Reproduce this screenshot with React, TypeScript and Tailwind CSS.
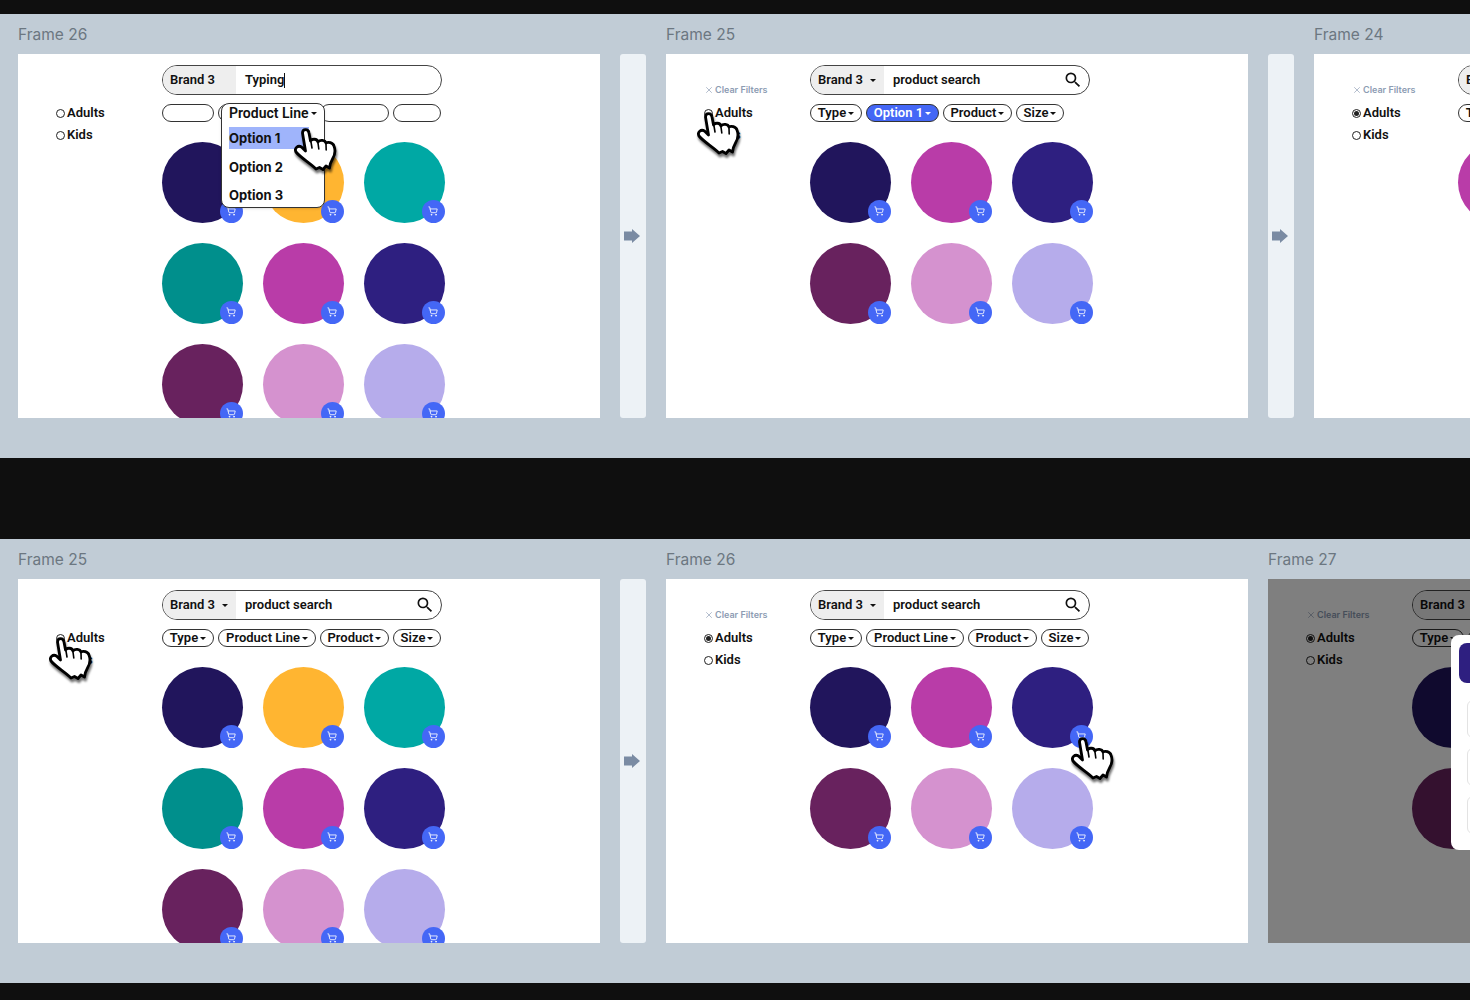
import { ShoppingCart, X } from 'lucide-react'
import { MdSearch } from 'react-icons/md'

type Props = {
  brandCaret?: boolean
  query: string
  typing?: boolean
  clear?: boolean
  selected?: boolean
  option?: boolean
  blank?: boolean
  colors: string[]
  hand?: string
  dim?: boolean
  dropdown?: boolean
}

const all = ['bg-[#21155c]', 'bg-[#ffb531]', 'bg-[#00a8a4]', 'bg-[#008f8c]', 'bg-[#b93ca8]', 'bg-[#2e1f80]', 'bg-[#68225e]', 'bg-[#d592cf]', 'bg-[#b6aceb]']
const filtered = ['bg-[#21155c]', 'bg-[#b93ca8]', 'bg-[#2e1f80]', 'bg-[#68225e]', 'bg-[#d592cf]', 'bg-[#b6aceb]']

function Caret({ className = 'ml-[2px] border-t-[#111]' }: { className?: string }) {
  return <span className={`h-0 w-0 border-x-[3px] border-t-[3px] border-x-transparent ${className}`} />
}

function Hand({ className }: { className: string }) {
  return (
    <svg viewBox="0 0 43 50" className={`absolute z-20 h-[50px] w-[43px] drop-shadow-[1px_3px_1px_rgba(0,0,0,0.55)] ${className}`}>
      <path
        d="M8.5 9C8.5 4.5 14.5 4.5 15 9L16.5 17C18 14.5 23 14.5 24 18C26 15.5 31 16 32 19C34 17.5 39 18.5 40 22C41.5 26 41 31 38.5 35C37 37.5 36 40 35.5 44L32 42L29 45.5L25.5 43.5L22 45C16 39 7 34 2 28C0 24 4 21 7.5 23L11.5 27Z"
        fill="#fff"
        stroke="#000"
        strokeWidth="2.8"
        strokeLinejoin="round"
      />
      <path d="M17 18L18 24M24 19L24.8 25M32 20L32.2 26" stroke="#000" strokeWidth="1.6" fill="none" strokeLinecap="round" />
    </svg>
  )
}

function Radio({ label, on }: { label: string; on?: boolean }) {
  return (
    <div className="flex h-[18px] items-center gap-[2px] font-['Roboto',sans-serif] text-[13px] font-semibold text-[#111]">
      <span className="flex h-[9px] w-[9px] items-center justify-center rounded-full border border-[#222]">
        {on && <span className="h-[5px] w-[5px] rounded-full bg-[#222]" />}
      </span>
      {label}
    </div>
  )
}

function Pill({ label, width, active, blank }: { label: string; width: string; active?: boolean; blank?: boolean }) {
  return (
    <div
      className={`flex h-[18px] items-center justify-center rounded-full border border-[#333] font-['Roboto',sans-serif] text-[13px] font-semibold ${width} ${
        active ? 'bg-[#4467f6] text-white' : 'bg-white text-[#111]'
      }`}
    >
      {!blank && label}
      {!blank && <Caret className={active ? 'ml-[2px] border-t-white' : 'ml-[2px] border-t-[#111]'} />}
    </div>
  )
}

function Product({ color }: { color: string }) {
  return (
    <div className={`relative h-[81px] w-[81px] rounded-full ${color}`}>
      <div className="absolute bottom-0 right-0 flex h-[23px] w-[23px] items-center justify-center rounded-full bg-[#4467f6] pb-px pr-px">
        <ShoppingCart size={10} strokeWidth={2} className="text-white" />
      </div>
    </div>
  )
}

function Dropdown() {
  return (
    <div className="absolute left-[203px] top-[49px] z-10 h-[105px] w-[104px] rounded-lg border border-[#333] bg-white px-[7px] font-['Inter',sans-serif] text-[13px] font-bold text-[#111] shadow-sm">
      <div className="flex h-[18px] items-center font-['Roboto',sans-serif] text-[14px] font-semibold">
        Product Line
        <Caret />
      </div>
      <div className="mt-[5px] flex h-[22px] w-[80px] items-center bg-[#9fb4fb] pt-px">Option 1</div>
      <div className="mt-[7px] flex h-[22px] items-center pt-px">Option 2</div>
      <div className="mt-[7px] flex h-[22px] items-center">Option 3</div>
    </div>
  )
}

function Modal() {
  return (
    <div className="absolute left-[183px] top-[56px] z-10 h-[215px] w-[300px] rounded-lg bg-white p-2">
      <div className="h-10 rounded-lg bg-[#2e1f80]" />
      <div className="ml-2 mt-[17px] flex flex-col gap-[10px]">
        <div className="h-[38px] rounded-md border border-[#e3e3e3]" />
        <div className="h-[38px] rounded-md border border-[#e3e3e3]" />
        <div className="h-[38px] rounded-md border border-[#e3e3e3]" />
      </div>
    </div>
  )
}

function Frame({ brandCaret = true, query, typing, clear = true, selected, option, blank, colors, hand, dim, dropdown }: Props) {
  return (
    <div className="relative flex h-[364px] w-[582px] shrink-0 overflow-hidden bg-white">
      <div className="w-[144px] shrink-0 pl-[38px] pt-[30px]">
        <div className="mb-2 flex h-3 items-center gap-px font-['Inter',sans-serif] text-[9px] font-semibold text-[#8d9cb3]">
          {clear && <X size={10} strokeWidth={1.6} />}
          {clear && 'Clear Filters'}
        </div>
        <div className="flex flex-col gap-[4px]">
          <Radio label="Adults" on={selected} />
          <Radio label="Kids" />
        </div>
      </div>
      <div className="w-[280px] shrink-0 pt-[11px]">
        <div className="flex h-[30px] items-center overflow-hidden rounded-full border border-[#444] font-['Roboto',sans-serif] text-[13px] font-semibold text-[#111]">
          <div className="flex h-full w-[73px] shrink-0 items-center bg-[#eeeeee] pl-[7px]">
            Brand 3
            {brandCaret && <Caret className="ml-[7px] border-t-[#111]" />}
          </div>
          <div className="flex flex-1 items-center pl-[9px] pr-[6px]">
            <span>{query}</span>
            {typing && <span className="h-[15px] w-px bg-[#111]" />}
            {!typing && <MdSearch size={20} className="ml-auto text-[#111]" />}
          </div>
        </div>
        <div className="mt-[9px] flex gap-1">
          <Pill label="Type" width="w-[52px]" blank={blank} />
          {option ? (
            <Pill label="Option 1" width="w-[73px]" active />
          ) : (
            <Pill label="Product Line" width="w-[98px]" blank={blank} />
          )}
          <Pill label="Product" width="w-[69px]" blank={blank} />
          <Pill label="Size" width="w-[48px]" blank={blank} />
        </div>
        <div className="mt-5 grid w-[283px] grid-cols-3 gap-5">
          {colors.map((c) => (
            <Product key={c} color={c} />
          ))}
        </div>
      </div>
      {dropdown && <Dropdown />}
      {hand && <Hand className={hand} />}
      {dim && <div className="absolute inset-0 bg-black/50" />}
      {dim && <Modal />}
    </div>
  )
}

function Label({ text, width }: { text: string; width: string }) {
  return (
    <div className={`flex h-10 shrink-0 items-center pt-px font-['Inter',sans-serif] text-[15.5px] text-[#6c7781] ${width}`}>{text}</div>
  )
}

function Connector() {
  return (
    <div className="flex h-[364px] w-[26px] shrink-0 items-center justify-center rounded-[3px] bg-[#edf2f6]">
      <svg viewBox="0 0 16 14" className="h-[14px] w-4 -translate-x-px text-[#7a8ba3]">
        <path d="M0 2.5H8V0L16 7L8 14V11.5H0Z" fill="currentColor" />
      </svg>
    </div>
  )
}

export default function App() {
  return (
    <div className="h-[1000px] w-[1470px] overflow-hidden bg-[#0f0f0f] pt-[14px]">
      <section className="h-[444px] overflow-hidden bg-[#c1ccd6] pl-[18px]">
        <div className="flex">
          <Label text="Frame 26" width="w-[648px]" />
          <Label text="Frame 25" width="w-[648px]" />
          <Label text="Frame 24" width="w-[300px]" />
        </div>
        <div className="flex gap-5">
          <Frame brandCaret={false} query="Typing" typing clear={false} blank colors={all} dropdown hand="left-[276px] top-[70px]" />
          <Connector />
          <Frame query="product search" option colors={filtered} hand="left-[31px] top-[54px]" />
          <Connector />
          <Frame query="product search" selected colors={filtered.slice(1, 4)} />
        </div>
      </section>
      <section className="mt-[81px] h-[444px] overflow-hidden bg-[#c1ccd6] pl-[18px]">
        <div className="flex">
          <Label text="Frame 25" width="w-[648px]" />
          <Label text="Frame 26" width="w-[602px]" />
          <Label text="Frame 27" width="w-[200px]" />
        </div>
        <div className="flex gap-5">
          <Frame query="product search" clear={false} colors={all} hand="left-[31px] top-[54px]" />
          <Connector />
          <Frame query="product search" selected colors={filtered} hand="left-[405px] top-[154px]" />
          <Frame query="product search" selected colors={filtered} dim />
        </div>
      </section>
    </div>
  )
}
